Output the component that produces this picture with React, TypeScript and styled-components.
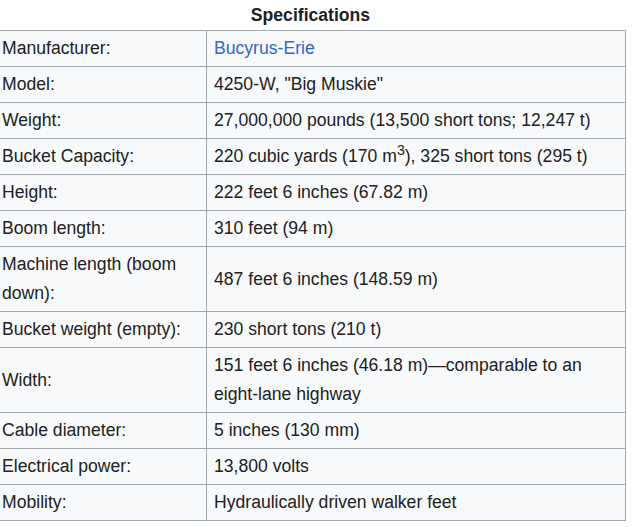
import React from 'react';
import styled, { createGlobalStyle } from 'styled-components';

const GlobalStyle = createGlobalStyle`
  body {
    margin: 0;
    background: #ffffff;
    font-family: "Liberation Sans", Arial, sans-serif;
    color: #202122;
  }
`;

const SpecTable = styled.table`
  margin-left: -5px;
  width: 630px;
  table-layout: fixed;
  border-collapse: collapse;
  font-size: 17.6px;
  line-height: 29px;
  background: #f8f9fa;
`;

const Caption = styled.caption`
  font-weight: bold;
  text-align: center;
  height: 30px;
  line-height: 30px;
  background: #ffffff;
`;

const LabelCell = styled.th`
  font-weight: normal;
  text-align: left;
  vertical-align: middle;
  padding: 3px 6px;
  border: 1px solid #a2a9b1;
`;

const ValueCell = styled.td`
  vertical-align: middle;
  padding: 3px 6px 3px 7px;
  border: 1px solid #a2a9b1;

  sup {
    font-size: 0.8em;
    line-height: 1;
    vertical-align: super;
  }
`;

const Link = styled.a`
  color: #3366cc;
  text-decoration: none;
`;

const rows: { label: string; value: React.ReactNode }[] = [
  { label: 'Manufacturer:', value: <Link href="#">Bucyrus-Erie</Link> },
  { label: 'Model:', value: '4250-W, "Big Muskie"' },
  { label: 'Weight:', value: '27,000,000 pounds (13,500 short tons; 12,247 t)' },
  {
    label: 'Bucket Capacity:',
    value: (
      <>
        220 cubic yards (170 m<sup>3</sup>), 325 short tons (295 t)
      </>
    ),
  },
  { label: 'Height:', value: '222 feet 6 inches (67.82 m)' },
  { label: 'Boom length:', value: '310 feet (94 m)' },
  { label: 'Machine length (boom down):', value: '487 feet 6 inches (148.59 m)' },
  { label: 'Bucket weight (empty):', value: '230 short tons (210 t)' },
  { label: 'Width:', value: '151 feet 6 inches (46.18 m)—comparable to an eight-lane highway' },
  { label: 'Cable diameter:', value: '5 inches (130 mm)' },
  { label: 'Electrical power:', value: '13,800 volts' },
  { label: 'Mobility:', value: 'Hydraulically driven walker feet' },
];

export default function App() {
  return (
    <>
      <GlobalStyle />
      <SpecTable>
        <Caption>Specifications</Caption>
        <colgroup>
          <col style={{ width: 211 }} />
          <col style={{ width: 419 }} />
        </colgroup>
        <tbody>
          {rows.map((row) => (
            <tr key={row.label}>
              <LabelCell>{row.label}</LabelCell>
              <ValueCell>{row.value}</ValueCell>
            </tr>
          ))}
        </tbody>
      </SpecTable>
    </>
  );
}
